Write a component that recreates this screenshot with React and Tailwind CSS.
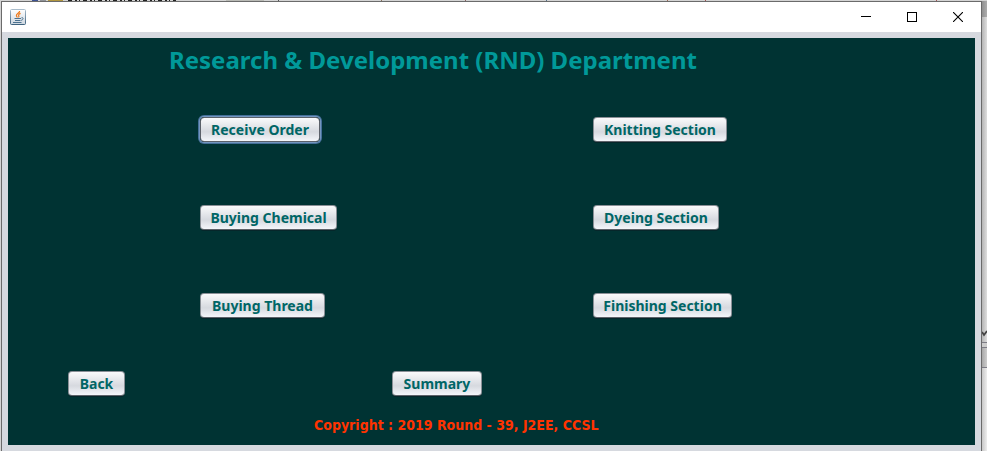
import React from 'react';

function SwingButton({ width, focused = false, children }) {
  return (
    <button
      type="button"
      className={`${width} ${
        focused
          ? 'border-[#5b6069] shadow-[0_0_0_1px_#7396bf,0_0_0_2px_#456f99]'
          : 'border-[#8a8f96] border-b-[#5d6269] shadow-[0_1px_0_#06262a]'
      } h-[25px] shrink-0 whitespace-nowrap rounded-[4px] border bg-linear-to-b from-[#fafafb] via-[#d6d9df] via-60% to-[#f4f6fa] text-center text-[14px] leading-[23px] font-bold text-[#006666]`}
    >
      {children}
    </button>
  );
}

function JavaIcon() {
  return (
    <svg width="16" height="16" viewBox="0 0 16 16" aria-hidden="true">
      <defs>
        <linearGradient id="tile" x1="0" y1="0" x2="0" y2="1">
          <stop offset="0" stopColor="#ffffff" />
          <stop offset="1" stopColor="#cdd6df" />
        </linearGradient>
        <linearGradient id="edge" x1="0" y1="0" x2="0" y2="1">
          <stop offset="0" stopColor="#a9bccb" />
          <stop offset="1" stopColor="#3f637f" />
        </linearGradient>
      </defs>
      <rect x="0.5" y="0.5" width="15" height="15" rx="1" fill="url(#tile)" stroke="url(#edge)" />
      <path d="M9.6 2C10 4 6.2 4.6 6.4 6.6c.1.9 1 1.400 1 2M10.600 4.400C8.800 5 8.200 6 8.800 6.800c.4.6 0 1.200-.4 1.600" fill="none" stroke="#ee7a1c" strokeWidth="1.200" />
      <path d="M4.500 9.500h6.500M5 11.500h5.500M3 13.500h8.500M11.500 8.700c2.200-.5 2.200 2-.4 2.700" fill="none" stroke="#4c7391" strokeWidth="1" />
    </svg>
  );
}

function BackgroundTop() {
  return (
    <div className="flex h-px overflow-hidden bg-[#d4d4d4]" aria-hidden="true">
      <span className="ml-[32px] h-px w-[6px] bg-[#3d5293]" />
      <span className="ml-[2px] h-px w-[6px] bg-[#8f9298]" />
      <span className="ml-[2px] h-px w-[15px] bg-[#b1963f]" />
      <svg className="ml-[3px] shrink-0" width="160" height="1" viewBox="0 0 160 1">
        <path d="M2 .5h108" stroke="#222222" strokeDasharray="4 3 2 2 1 3" />
      </svg>
      <span className="h-px w-[38px] shrink-0 bg-[#b9bab5]" />
      <span className="ml-[14px] h-px w-px bg-[#555555]" />
      <span className="ml-[102px] h-px w-px bg-[#8a7560]" />
      <span className="ml-[83px] h-px w-px bg-[#8c6464]" />
      <span className="ml-[80px] h-px w-px bg-[#56708a]" />
      <span className="ml-[120px] h-px w-px bg-[#a06b55]" />
      <span className="ml-[37px] h-px w-px bg-[#a55555]" />
      <span className="ml-[230px] h-px w-px bg-[#a55555]" />
    </div>
  );
}

function TitleBar() {
  const control = 'flex h-[30px] w-[46px] items-center justify-center text-black';
  return (
    <header className="flex h-[30px] shrink-0 items-center bg-white pl-[8px]">
      <JavaIcon />
      <div className="ml-auto flex">
        <button type="button" aria-label="Minimize" className={control}>
          <svg width="10" height="10" viewBox="0 0 10 10" shapeRendering="crispEdges"><path d="M0 4.500h10" stroke="currentColor" /></svg>
        </button>
        <button type="button" aria-label="Maximize" className={control}>
          <svg width="10" height="10" viewBox="0 0 10 10" shapeRendering="crispEdges"><path d="M.5.5h9v9h-9z" fill="none" stroke="currentColor" /></svg>
        </button>
        <button type="button" aria-label="Close" className={control}>
          <svg width="10" height="10" viewBox="0 0 10 10"><path d="M0 0l10 10M10 0L0 10" stroke="currentColor" strokeWidth="1.100" /></svg>
        </button>
      </div>
    </header>
  );
}

function BackgroundRight() {
  return (
    <div className="flex w-[5px] shrink-0 flex-col bg-linear-to-r from-[#b5b5b5] to-[#dedede]" aria-hidden="true">
      <div className="h-[16px] bg-linear-to-r from-[#909090] to-[#adadad]" />
      <div className="h-[313px]" />
      <svg width="5" height="8" viewBox="0 0 5 8"><path d="M0 2l2 3 3-4" fill="none" stroke="#444444" strokeWidth="1.800" /></svg>
      <div className="mt-[4px] h-[6px] border-y border-[#7c7c85] bg-[#cccccc]" />
      <div className="h-[20px] border-b border-[#7c7c85] bg-linear-to-r from-[#a8a8a8] to-[#cecece]" />
      <div className="flex-1 bg-linear-to-r from-[#c8c8c8] to-[#eeeeee]" />
    </div>
  );
}

export default function App() {
  return (
    <div className="flex min-h-screen flex-col bg-[#d4d4d4] font-['Tahoma','Noto_Sans',sans-serif]">
      <BackgroundTop />
      <div className="flex flex-1 pl-px">
        <div className="flex min-w-0 flex-1 flex-col border border-b-0 border-[#6b6b6b] bg-[#d6d9df]">
          <TitleBar />
          <main className="mx-[6px] my-[6px] flex flex-1 flex-col bg-[#003333]">
            <h1 className="mt-[6px] pl-[161px] text-[24px] leading-[32px] font-bold text-[#009999]">
              Research &amp; Development (RND) Department
            </h1>
            <div className="mt-[41px] grid grid-cols-[393px_1fr] gap-y-[63px] pl-[192px]">
              <SwingButton width="w-[120px]" focused>Receive Order</SwingButton>
              <SwingButton width="w-[134px]">Knitting Section</SwingButton>
              <SwingButton width="w-[137px]">Buying Chemical</SwingButton>
              <SwingButton width="w-[126px]">Dyeing Section</SwingButton>
              <SwingButton width="w-[125px]">Buying Thread</SwingButton>
              <SwingButton width="w-[139px]">Finishing Section</SwingButton>
            </div>
            <div className="mt-[53px] grid grid-cols-[324px_1fr] pl-[60px]">
              <SwingButton width="w-[57px]">Back</SwingButton>
              <SwingButton width="w-[90px]">Summary</SwingButton>
            </div>
            <p className="mt-[19px] pl-[306px] font-['Tahoma','DejaVu_Sans_Condensed',sans-serif] text-[14px] leading-[20px] font-bold text-[#ff3300]">
              Copyright : 2019 Round - 39, J2EE, CCSL
            </p>
          </main>
        </div>
        <BackgroundRight />
      </div>
    </div>
  );
}
